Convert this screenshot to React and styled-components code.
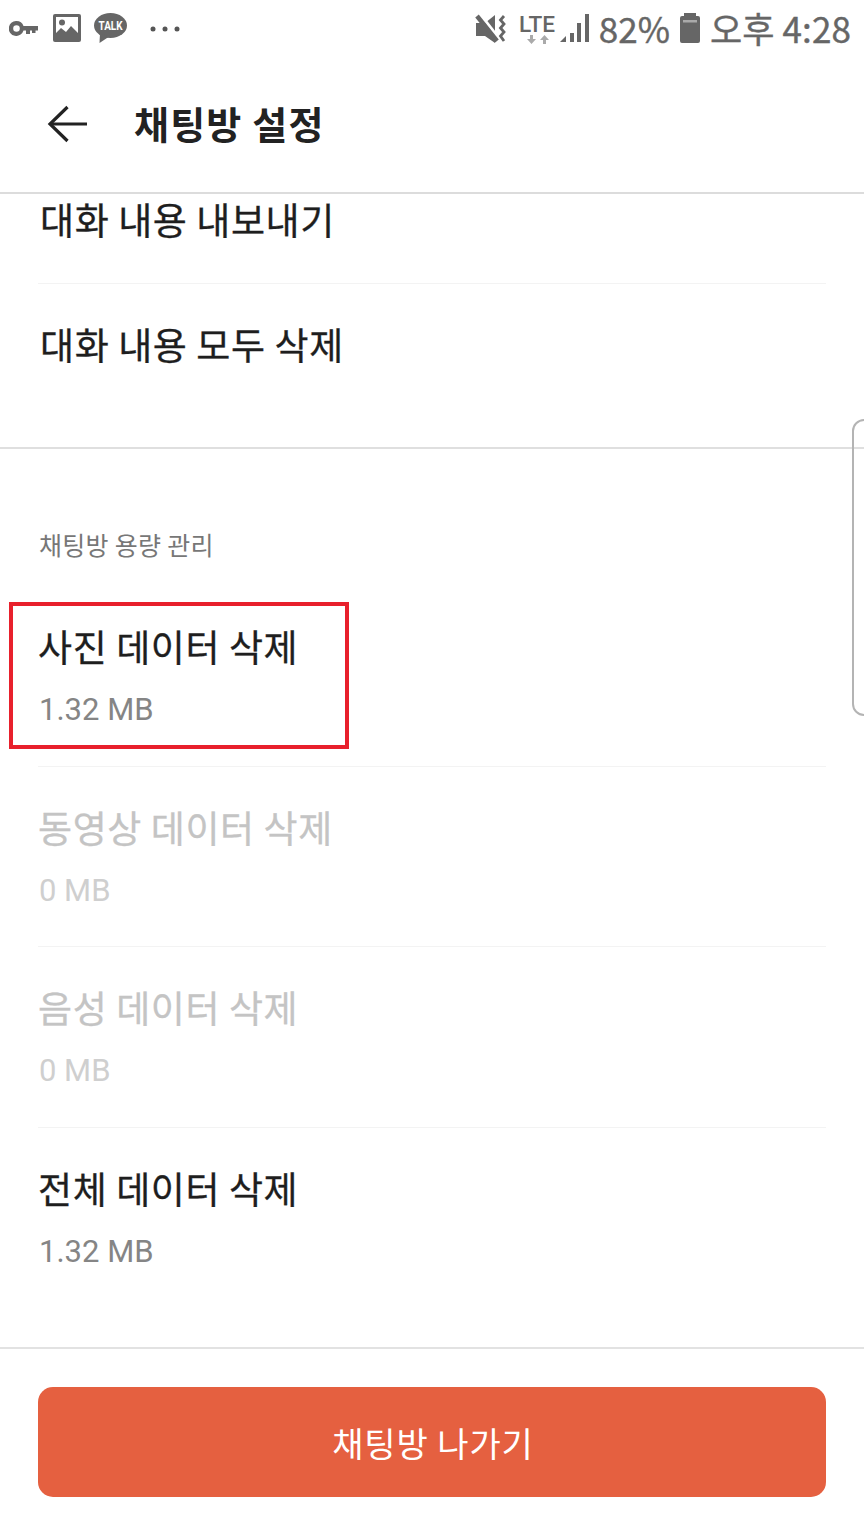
import styled, { createGlobalStyle } from 'styled-components';

const Global = createGlobalStyle`
    html, body {
        margin: 0;
        padding: 0;
        background: #fff;
    }
    body {
        font-family: "Noto Sans CJK KR", "Noto Sans", sans-serif;
    }
`

const Page = styled.div`
    position: relative;
    width: 864px;
    height: 1536px;
    overflow: hidden;
    display: flex;
    flex-direction: column;
    background: #fff;
`

// Status bar
const StatusBar = styled.div`
    height: 56px;
    display: flex;
    justify-content: space-between;
    align-items: center;
    color: #666;
`

const StatusGroup = styled.div`
    display: flex;
    align-items: center;
    padding: ${props => props.$padding};
`

const StatusText = styled.span`
    margin-left: ${props => props.$left || 0}px;
    font-family: "Noto Sans CJK KR", sans-serif;
    font-size: 35px;
    line-height: 56px;
    letter-spacing: 0.1px;
    color: #666;
    -webkit-text-stroke: 0.4px #666;
`

const Icon = styled.svg`
    display: block;
    flex: none;
    margin-left: ${props => props.$left || 0}px;
    margin-top: ${props => props.$top || 0}px;
`

// Header
const Header = styled.header`
    height: 138px;
    box-sizing: border-box;
    border-bottom: 2px solid #dcdcdc;
    display: flex;
    align-items: center;
    gap: 47px;
    padding: 0 0 4px 47px;
`

const HeaderTitle = styled.h1`
    margin: 0;
    font-size: 38px;
    font-weight: 700;
    letter-spacing: 1.2px;
    color: #222;
`

// Settings list, scrolled a little under the header
const Content = styled.main`
    flex: 1;
    min-height: 0;
`

const Scrolled = styled.div`
    margin-top: -34px;
`

const ExportSection = styled.section`
    height: 289px;
    box-sizing: border-box;
    border-bottom: 2px solid #dfdfdf;
    padding: 0 38px;
`

const ActionRow = styled.div`
    height: 124px;
    box-sizing: border-box;
    display: flex;
    align-items: center;
    padding: 0 0 5px 2px;
    border-bottom: ${props => props.$last ? 'none' : '1px solid #f3f3f3'};
`

const RowTitle = styled.div`
    font-size: 37px;
    font-weight: 400;
    line-height: 50px;
    letter-spacing: 0.6px;
    color: ${props => props.$off ? '#c4c4c4' : '#1e1e1e'};
    -webkit-text-stroke: 0.3px ${props => props.$off ? '#c4c4c4' : '#1e1e1e'};
    white-space: nowrap;
`

const SectionLabel = styled.div`
    padding: 78px 38px 0 39px;
    height: 59px;
    font-size: 25px;
    line-height: 34px;
    letter-spacing: 0.3px;
    color: #777;
`

const DataList = styled.div`
    padding: 0 38px;
`

const DataRow = styled.div`
    height: ${props => props.$short ? 180 : 181}px;
    box-sizing: border-box;
    padding-top: 35px;
    border-bottom: ${props => props.$last ? 'none' : '1px solid #f3f3f3'};
`

const RowSize = styled.div`
    margin-top: 14px;
    padding-left: 1px;
    font-family: Roboto, sans-serif;
    font-size: 31px;
    line-height: 50px;
    color: ${props => props.$off ? '#cfcfcf' : '#858585'};
`

// Footer
const Footer = styled.footer`
    height: 189px;
    box-sizing: border-box;
    border-top: 2px solid #e2e2e2;
    padding: 38px 38px 0;
`

const LeaveButton = styled.button`
    display: block;
    width: 100%;
    height: 110px;
    padding: 0 0 0 2px;
    border: none;
    border-radius: 15px;
    background: #e56040;
    color: #fff;
    font-family: inherit;
    font-size: 34px;
    letter-spacing: 0.9px;
`

// Overlays
const Highlight = styled.div`
    position: absolute;
    left: 9px;
    top: 602px;
    width: 340px;
    height: 147px;
    box-sizing: border-box;
    border: 4px solid #e8202c;
`

const EdgeHandle = styled.div`
    position: absolute;
    left: 852px;
    top: 419px;
    width: 24px;
    height: 297px;
    box-sizing: border-box;
    border: 2px solid #b4b4b4;
    border-radius: 16px;
`

const KeyIcon = () => (
    <Icon width="30" height="15" viewBox="0 0 30 15" fill="#666">
        <path fillRule="evenodd" d="M7.500 0a7.500 7.500 0 0 1 7 5H29v4.500h-2.500V12h-3.500V9.500h-2V13h-4V9.500h-2.500A7.500 7.500 0 1 1 7.500 0zM7.500 4.200a3.300 3.300 0 1 0 0 6.600 3.300 3.300 0 0 0 0-6.600z" />
    </Icon>
)

const ImageIcon = () => (
    <Icon $left={14} width="28" height="28" viewBox="0 0 28 28">
        <rect width="28" height="28" rx="2" fill="#666" />
        <rect x="3" y="3" width="22" height="22" fill="#fff" />
        <circle cx="9" cy="8.500" r="3" fill="#666" />
        <path d="M3 25v-6l5-5 5 4 5-6 7 7v6z" fill="#666" />
    </Icon>
)

const TalkIcon = () => (
    <Icon $left={13} width="33" height="30" viewBox="0 0 33 30">
        <ellipse cx="16.500" cy="12.500" rx="16.500" ry="12.500" fill="#666" />
        <path d="M6 20l-0.500 10 9-6z" fill="#666" />
        <text x="16.500" y="17" textAnchor="middle" fontFamily="Roboto, sans-serif" fontWeight="700" fontSize="12" textLength="24" lengthAdjust="spacingAndGlyphs" fill="#fff">TALK</text>
    </Icon>
)

const DotsIcon = () => (
    <Icon $left={23} $top={2} width="30" height="6" viewBox="0 0 30 6" fill="#555">
        <circle cx="3" cy="3" r="2.500" />
        <circle cx="15" cy="3" r="2.500" />
        <circle cx="27" cy="3" r="2.500" />
    </Icon>
)

const MuteIcon = () => (
    <Icon width="32" height="29" viewBox="0 0 32 29">
        <path d="M1 9h9l10-8v28l-10-7H1z" fill="#666" />
        <path d="M5 0l21 27" stroke="#fff" strokeWidth="3" />
        <path d="M2 2l20 25" stroke="#666" strokeWidth="4.500" />
        <path d="M29 2l-3.500 4 3.500 4-3.500 4 3.500 4-3.500 4 3.500 5" stroke="#666" strokeWidth="2.800" fill="none" />
    </Icon>
)

const LteIcon = () => (
    <Icon $left={12} width="37" height="34" viewBox="0 -6 37 34">
        <text x="0" y="15" fontFamily="Roboto, sans-serif" fontWeight="500" fontSize="22" textLength="36" lengthAdjust="spacingAndGlyphs" fill="#666">LTE</text>
        <path d="M11 18v4H8l4.500 5 4.500-5h-3v-4z" fill="#aaa" />
        <path d="M24 27v-4h-3l4.500-5 4.500 5h-3v4z" fill="#aaa" />
    </Icon>
)

const SignalIcon = () => (
    <Icon $left={4} width="29" height="28" viewBox="0 0 29 28" fill="#666">
        <path d="M0 28l6-6v6z" />
        <rect x="10" y="19" width="4" height="9" />
        <rect x="17" y="9" width="4" height="19" />
        <rect x="25" y="0" width="4" height="28" />
    </Icon>
)

const BatteryIcon = () => (
    <Icon $left={10} width="20" height="30" viewBox="0 0 20 30">
        <path d="M4 0h12v3h2a2 2 0 0 1 2 2v23a2 2 0 0 1-2 2H2a2 2 0 0 1-2-2V5a2 2 0 0 1 2-2h2z" fill="#666" />
        <rect x="3" y="7" width="14" height="2.500" fill="#aaa" />
    </Icon>
)

const BackArrow = () => (
    <Icon $top={4} width="40" height="38" viewBox="0 0 40 38" fill="none" stroke="#222" strokeWidth="3.200">
        <path d="M40 19H3" />
        <path d="M20.500 2L3 19l17.500 17" />
    </Icon>
)

const dataRows = [
    { title: '사진 데이터 삭제', size: '1.32 MB' },
    { title: '동영상 데이터 삭제', size: '0 MB', off: true, short: true },
    { title: '음성 데이터 삭제', size: '0 MB', off: true },
    { title: '전체 데이터 삭제', size: '1.32 MB', last: true },
]

const App = () => {

    return (
        <Page>
            <Global />

            <StatusBar>
                <StatusGroup $padding="0 0 0 9px">
                    <KeyIcon />
                    <ImageIcon />
                    <TalkIcon />
                    <DotsIcon />
                </StatusGroup>
                <StatusGroup $padding="0 13px 0 0">
                    <MuteIcon />
                    <LteIcon />
                    <SignalIcon />
                    <StatusText $left={10}>82%</StatusText>
                    <BatteryIcon />
                    <StatusText $left={10}>오후 4:28</StatusText>
                </StatusGroup>
            </StatusBar>

            <Header>
                <BackArrow />
                <HeaderTitle>채팅방 설정</HeaderTitle>
            </Header>

            <Content>
                <Scrolled>
                    <ExportSection>
                        <ActionRow><RowTitle>대화 내용 내보내기</RowTitle></ActionRow>
                        <ActionRow $last><RowTitle>대화 내용 모두 삭제</RowTitle></ActionRow>
                    </ExportSection>

                    <SectionLabel>채팅방 용량 관리</SectionLabel>

                    <DataList>
                        {dataRows.map(row => (
                            <DataRow key={row.title} $last={row.last} $short={row.short}>
                                <RowTitle $off={row.off}>{row.title}</RowTitle>
                                <RowSize $off={row.off}>{row.size}</RowSize>
                            </DataRow>
                        ))}
                    </DataList>
                </Scrolled>
            </Content>

            <Footer>
                <LeaveButton>채팅방 나가기</LeaveButton>
            </Footer>

            <Highlight />
            <EdgeHandle />
        </Page>
    )
}

export default App;
